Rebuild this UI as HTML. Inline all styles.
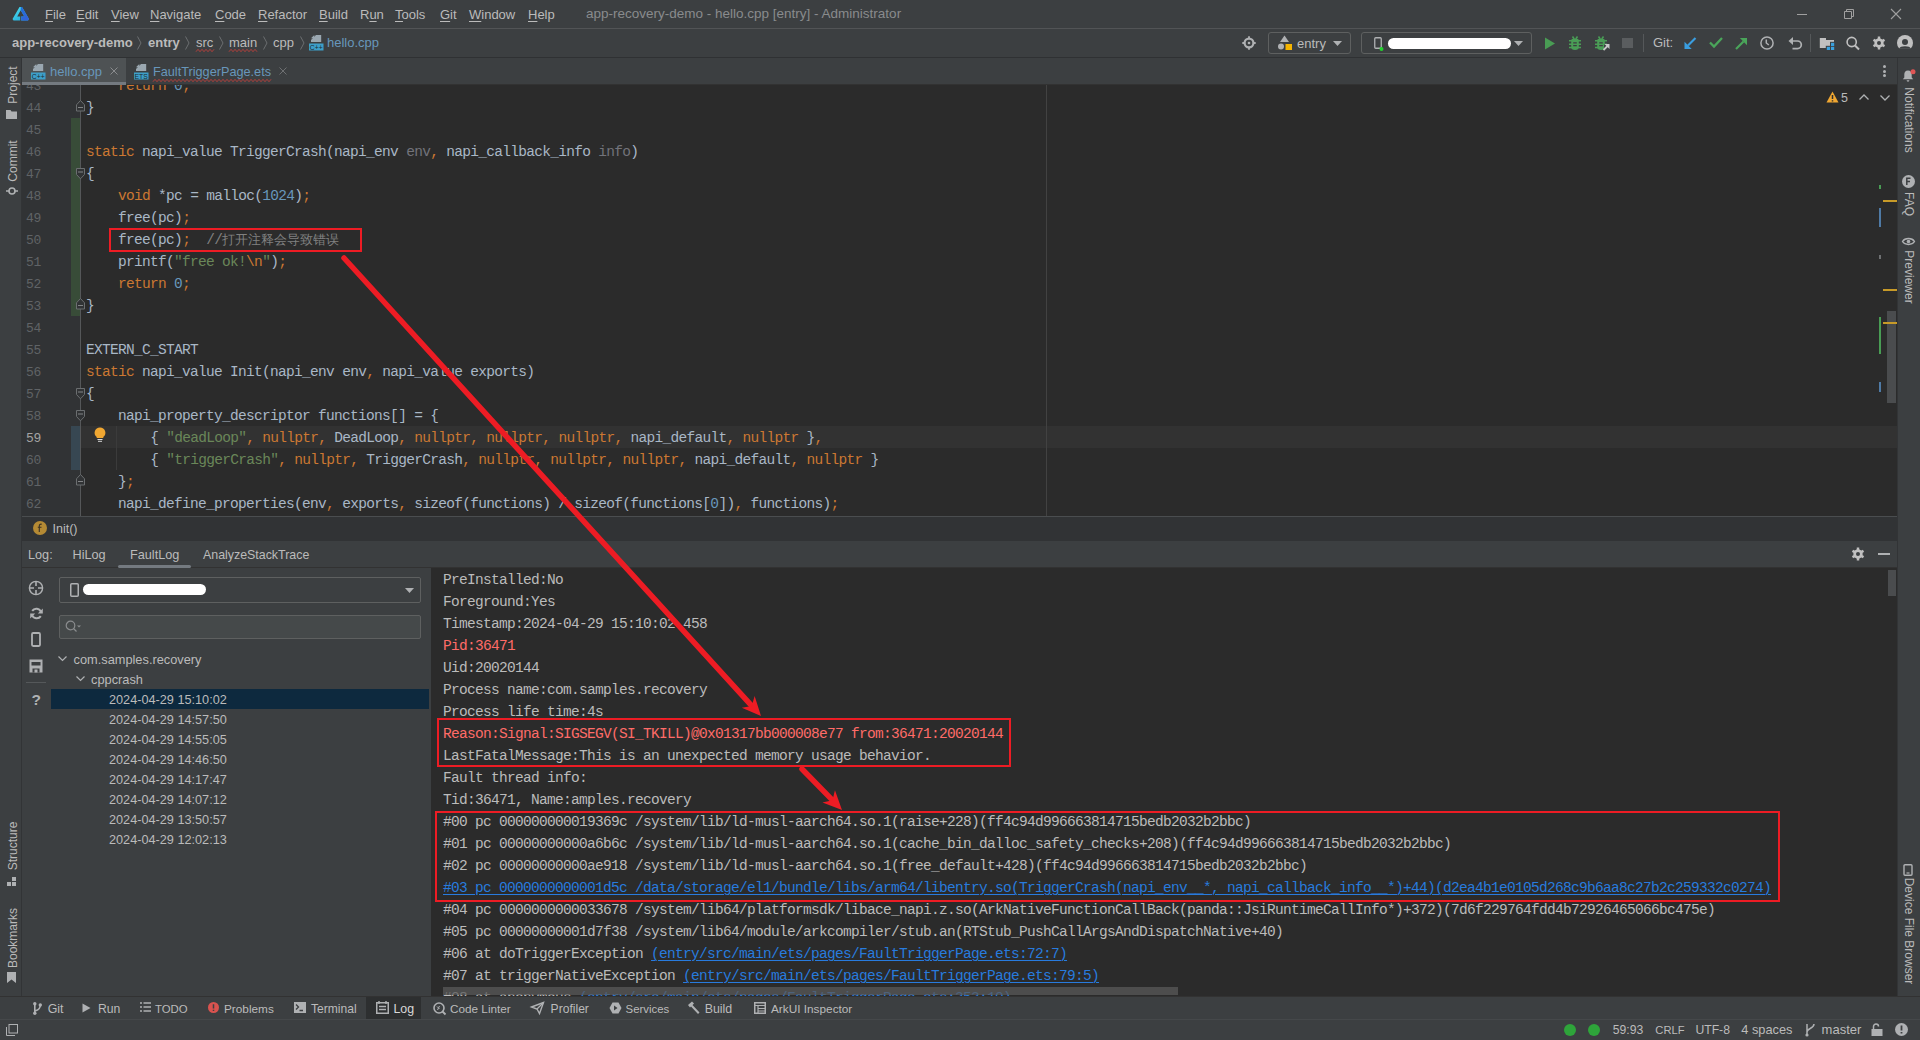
<!DOCTYPE html><html><head><meta charset="utf-8"><title>DevEco</title><style>
*{margin:0;padding:0;box-sizing:border-box}
html,body{width:1920px;height:1040px;overflow:hidden;background:#3c3f41}
body{position:relative;font-family:"Liberation Sans", sans-serif;color:#bbbbbb}
.a{position:absolute;white-space:pre}
svg.a{overflow:visible}
.m{font-family:"Liberation Mono", monospace}
</style></head><body><div class="a" style="left:0px;top:0px;width:1920px;height:1040px;background:#3c3f41;"></div><div class="a" style="left:0px;top:28px;width:1920px;height:1px;background:#525456;"></div><div class="a" style="left:0px;top:57px;width:1920px;height:1px;background:#2f3133;"></div><div class="a" style="left:21px;top:58px;width:1px;height:938px;background:#323436;"></div><div class="a" style="left:1897px;top:58px;width:1px;height:938px;background:#323436;"></div><div class="a" style="left:22px;top:58px;width:104px;height:24px;background:#4e5254;"></div><div class="a" style="left:22px;top:82px;width:104px;height:3px;background:#747a80;"></div><div class="a" style="left:126px;top:84px;width:1771px;height:1px;background:#323232;"></div><div class="a" style="left:22px;top:85px;width:59px;height:431px;background:#313335;"></div><div class="a" style="left:81px;top:85px;width:1816px;height:431px;background:#2b2b2b;"></div><div class="a" style="left:80px;top:85px;width:1px;height:431px;background:#555759;"></div><div class="a" style="left:81px;top:426px;width:1816px;height:22px;background:#323232;"></div><div class="a" style="left:1046px;top:85px;width:1px;height:431px;background:#424242;"></div><div class="a" style="left:22px;top:516px;width:1875px;height:1px;background:#4a4d4f;"></div><div class="a" style="left:22px;top:517px;width:1875px;height:24px;background:#313335;"></div><div class="a" style="left:22px;top:541px;width:1875px;height:26px;background:#3c3f41;"></div><div class="a" style="left:22px;top:567px;width:1875px;height:1px;background:#323232;"></div><div class="a" style="left:22px;top:568px;width:409px;height:428px;background:#3c3f41;"></div><div class="a" style="left:431px;top:568px;width:1466px;height:428px;background:#2b2b2b;"></div><div class="a" style="left:0px;top:996px;width:1920px;height:1px;background:#323232;"></div><div class="a" style="left:0px;top:1019px;width:1920px;height:1px;background:#45484a;"></div><svg class="a" style="left:12px;top:6px;" width="18" height="16" viewBox="0 0 18 16"><defs><linearGradient id="lg1" x1="0" y1="0" x2="1" y2="1"><stop offset="0" stop-color="#4fe3ef"/><stop offset="1" stop-color="#1a9fd8"/></linearGradient><linearGradient id="lg2" x1="0" y1="0" x2="1" y2="1"><stop offset="0" stop-color="#1f6fd8"/><stop offset="1" stop-color="#3a5fd8"/></linearGradient></defs>
<path d="M7.5 1 L10 1 L17 13 L16 14.5 L9.2 14.5 L9.2 10.5 L12.3 10.5 L8.7 4.2 L5.2 10.5 L8.2 10.5 L8.2 14.5 L1.5 14.5 L0.5 13 Z" fill="url(#lg1)"/>
<path d="M8.8 1 L10 1 L17 13 L16 14.5 L9.2 14.5 L9.2 10.5 L12.3 10.5 L8.7 4.2 Z" fill="url(#lg2)"/></svg><div class="a" style="left:45px;top:4.5px;font-size:13px;line-height:20px;color:#bbbbbb;font-weight:400;">File</div><div class="a" style="left:76px;top:4.5px;font-size:13px;line-height:20px;color:#bbbbbb;font-weight:400;">Edit</div><div class="a" style="left:111px;top:4.5px;font-size:13px;line-height:20px;color:#bbbbbb;font-weight:400;">View</div><div class="a" style="left:150px;top:4.5px;font-size:13px;line-height:20px;color:#bbbbbb;font-weight:400;">Navigate</div><div class="a" style="left:215px;top:4.5px;font-size:13px;line-height:20px;color:#bbbbbb;font-weight:400;">Code</div><div class="a" style="left:258px;top:4.5px;font-size:13px;line-height:20px;color:#bbbbbb;font-weight:400;">Refactor</div><div class="a" style="left:319px;top:4.5px;font-size:13px;line-height:20px;color:#bbbbbb;font-weight:400;">Build</div><div class="a" style="left:360px;top:4.5px;font-size:13px;line-height:20px;color:#bbbbbb;font-weight:400;">Run</div><div class="a" style="left:395px;top:4.5px;font-size:13px;line-height:20px;color:#bbbbbb;font-weight:400;">Tools</div><div class="a" style="left:440px;top:4.5px;font-size:13px;line-height:20px;color:#bbbbbb;font-weight:400;">Git</div><div class="a" style="left:469px;top:4.5px;font-size:13px;line-height:20px;color:#bbbbbb;font-weight:400;">Window</div><div class="a" style="left:528px;top:4.5px;font-size:13px;line-height:20px;color:#bbbbbb;font-weight:400;">Help</div><div class="a" style="left:586px;top:4.0px;font-size:13.5px;line-height:20px;color:#898b8d;font-weight:400;">app-recovery-demo - hello.cpp [entry] - Administrator</div><div class="a" style="left:1797px;top:14px;width:10px;height:1px;background:#a0a0a0;"></div><svg class="a" style="left:1843px;top:8px;" width="12" height="12" viewBox="0 0 12 12"><path d="M1.5 3.5h7v7h-7z M3.5 3.5v-2h7v7h-2" fill="none" stroke="#a0a0a0" stroke-width="1"/></svg><svg class="a" style="left:1890px;top:8px;" width="12" height="12" viewBox="0 0 12 12"><path d="M1 1L11 11M11 1L1 11" stroke="#a0a0a0" stroke-width="1.1"/></svg><div class="a" style="left:45px;top:4.5px;font-size:13px;line-height:20px;color:transparent"><span></span><span style="text-decoration:underline;text-decoration-color:#bbbbbb;text-underline-offset:2px">F</span></div><div class="a" style="left:76px;top:4.5px;font-size:13px;line-height:20px;color:transparent"><span></span><span style="text-decoration:underline;text-decoration-color:#bbbbbb;text-underline-offset:2px">E</span></div><div class="a" style="left:111px;top:4.5px;font-size:13px;line-height:20px;color:transparent"><span></span><span style="text-decoration:underline;text-decoration-color:#bbbbbb;text-underline-offset:2px">V</span></div><div class="a" style="left:150px;top:4.5px;font-size:13px;line-height:20px;color:transparent"><span></span><span style="text-decoration:underline;text-decoration-color:#bbbbbb;text-underline-offset:2px">N</span></div><div class="a" style="left:215px;top:4.5px;font-size:13px;line-height:20px;color:transparent"><span></span><span style="text-decoration:underline;text-decoration-color:#bbbbbb;text-underline-offset:2px">C</span></div><div class="a" style="left:258px;top:4.5px;font-size:13px;line-height:20px;color:transparent"><span></span><span style="text-decoration:underline;text-decoration-color:#bbbbbb;text-underline-offset:2px">R</span></div><div class="a" style="left:319px;top:4.5px;font-size:13px;line-height:20px;color:transparent"><span></span><span style="text-decoration:underline;text-decoration-color:#bbbbbb;text-underline-offset:2px">B</span></div><div class="a" style="left:360px;top:4.5px;font-size:13px;line-height:20px;color:transparent"><span>R</span><span style="text-decoration:underline;text-decoration-color:#bbbbbb;text-underline-offset:2px">u</span></div><div class="a" style="left:395px;top:4.5px;font-size:13px;line-height:20px;color:transparent"><span></span><span style="text-decoration:underline;text-decoration-color:#bbbbbb;text-underline-offset:2px">T</span></div><div class="a" style="left:440px;top:4.5px;font-size:13px;line-height:20px;color:transparent"><span></span><span style="text-decoration:underline;text-decoration-color:#bbbbbb;text-underline-offset:2px">G</span></div><div class="a" style="left:469px;top:4.5px;font-size:13px;line-height:20px;color:transparent"><span></span><span style="text-decoration:underline;text-decoration-color:#bbbbbb;text-underline-offset:2px">W</span></div><div class="a" style="left:528px;top:4.5px;font-size:13px;line-height:20px;color:transparent"><span></span><span style="text-decoration:underline;text-decoration-color:#bbbbbb;text-underline-offset:2px">H</span></div><div class="a" style="left:12px;top:33.0px;font-size:13px;line-height:20px;color:#bbbbbb;font-weight:700;">app-recovery-demo</div><svg class="a" style="left:137px;top:36px;" width="5" height="14" viewBox="0 0 5 14"><path d="M0.5 0.5 L4 7 L0.5 13.5" fill="none" stroke="#6b6e70" stroke-width="1"/></svg><div class="a" style="left:148px;top:33.0px;font-size:13px;line-height:20px;color:#bbbbbb;font-weight:700;">entry</div><svg class="a" style="left:185px;top:36px;" width="5" height="14" viewBox="0 0 5 14"><path d="M0.5 0.5 L4 7 L0.5 13.5" fill="none" stroke="#6b6e70" stroke-width="1"/></svg><div class="a" style="left:196px;top:33.0px;font-size:13px;line-height:20px;color:#bbbbbb;font-weight:400;">src</div><svg class="a" style="left:219px;top:36px;" width="5" height="14" viewBox="0 0 5 14"><path d="M0.5 0.5 L4 7 L0.5 13.5" fill="none" stroke="#6b6e70" stroke-width="1"/></svg><div class="a" style="left:229px;top:33.0px;font-size:13px;line-height:20px;color:#bbbbbb;font-weight:400;">main</div><svg class="a" style="left:263px;top:36px;" width="5" height="14" viewBox="0 0 5 14"><path d="M0.5 0.5 L4 7 L0.5 13.5" fill="none" stroke="#6b6e70" stroke-width="1"/></svg><div class="a" style="left:273px;top:33.0px;font-size:13px;line-height:20px;color:#bbbbbb;font-weight:400;">cpp</div><svg class="a" style="left:300px;top:36px;" width="5" height="14" viewBox="0 0 5 14"><path d="M0.5 0.5 L4 7 L0.5 13.5" fill="none" stroke="#6b6e70" stroke-width="1"/></svg><svg class="a" style="left:196px;top:49.3px;" width="18" height="3" viewBox="0 0 18 3"><path d="M0 2.7 L2 0.3 L4 2.7 L6 0.3 L8 2.7 L10 0.3 L12 2.7 L14 0.3 L16 2.7 L18 0.3" fill="none" stroke="#bc3f3c" stroke-width="0.9"/></svg><svg class="a" style="left:229px;top:49.3px;" width="28" height="3" viewBox="0 0 28 3"><path d="M0 2.7 L2 0.3 L4 2.7 L6 0.3 L8 2.7 L10 0.3 L12 2.7 L14 0.3 L16 2.7 L18 0.3 L20 2.7 L22 0.3 L24 2.7 L26 0.3 L28 2.7" fill="none" stroke="#bc3f3c" stroke-width="0.9"/></svg><svg class="a" style="left:309px;top:35px;" width="15" height="16" viewBox="0 0 15 16"><path d="M7 0 H12.2 V7 H2 V5 Z" fill="#9aa7b0"/><path d="M2 3.3 L5.3 0 V3.3 Z" fill="#9aa7b0"/><rect x="0" y="8.5" width="14.5" height="7" fill="#3d9fc9"/><text x="7.2" y="14.6" font-family="Liberation Sans" font-size="6.8" font-weight="400" fill="#1e2a30" text-anchor="middle">C++</text></svg><div class="a" style="left:327px;top:33.0px;font-size:13px;line-height:20px;color:#6897bb;font-weight:400;">hello.cpp</div><svg class="a" style="left:1242px;top:36px;" width="14" height="14" viewBox="0 0 14 14"><circle cx="7" cy="7" r="4.4" fill="none" stroke="#afb1b3" stroke-width="2.2"/><circle cx="7" cy="7" r="1.3" fill="#afb1b3"/><path d="M7 0.3V2.5M7 11.5V13.7M0.3 7H2.5M11.5 7H13.7" stroke="#afb1b3" stroke-width="1.8"/></svg><div class="a" style="left:1268px;top:32px;width:83px;height:22px;border:1px solid #5e6060;border-radius:3px"></div><svg class="a" style="left:1278px;top:35px;" width="16" height="16" viewBox="0 0 16 16"><path d="M6.5 0.5 L11 7 H2 Z" fill="#afb1b3"/><circle cx="3" cy="11.5" r="3" fill="#afb1b3"/><rect x="7.5" y="9" width="6.5" height="6" fill="#f4b400"/></svg><div class="a" style="left:1297px;top:34.0px;font-size:13px;line-height:20px;color:#bbbbbb;font-weight:400;">entry</div><svg class="a" style="left:1333px;top:41px;" width="9" height="5" viewBox="0 0 9 5"><path d="M0 0H9L4.5 5Z" fill="#afb1b3"/></svg><div class="a" style="left:1361px;top:32px;width:171px;height:22px;border:1px solid #5e6060;border-radius:3px"></div><svg class="a" style="left:1374px;top:37px;" width="9" height="13" viewBox="0 0 9 13"><rect x="0.75" y="0.75" width="6.5" height="10.5" rx="1" fill="none" stroke="#afb1b3" stroke-width="1.3"/><circle cx="7.5" cy="12" r="2" fill="#22d32e"/></svg><div class="a" style="left:1388px;top:38px;width:123px;height:11px;background:#ffffff;border-radius:6px"></div><svg class="a" style="left:1514px;top:41px;" width="9" height="5" viewBox="0 0 9 5"><path d="M0 0H9L4.5 5Z" fill="#afb1b3"/></svg><svg class="a" style="left:1544px;top:37px;" width="12" height="13" viewBox="0 0 12 13"><path d="M1 0.5 L11 6.5 L1 12.5 Z" fill="#499c54"/></svg><svg class="a" style="left:1569px;top:36px;" width="12" height="14" viewBox="0 0 12 14"><path d="M3.5 0.6 L5.2 2.9 M8.5 0.6 L6.8 2.9" stroke="#4a9d56" stroke-width="1.6"/><path d="M2.2 4.2 Q2.2 2.5 6 2.5 Q9.8 2.5 9.8 4.2 V11.3 Q9.8 14 6 14 Q2.2 14 2.2 11.3 Z" fill="#4a9d56"/><path d="M0 4.8H12 M0 8.2H12 M0 11.5H12" stroke="#4a9d56" stroke-width="1.5"/><path d="M4.2 6.8H7.8 M4.2 9.6H7.8" stroke="#3c3f41" stroke-width="1.3"/></svg><svg class="a" style="left:1595px;top:36px;" width="15" height="15" viewBox="0 0 15 15"><path d="M3.5 0.6 L5.2 2.9 M8.5 0.6 L6.8 2.9" stroke="#4a9d56" stroke-width="1.6"/><path d="M2.2 4.2 Q2.2 2.5 6 2.5 Q9.8 2.5 9.8 4.2 V11.3 Q9.8 14 6 14 Q2.2 14 2.2 11.3 Z" fill="#4a9d56"/><path d="M0 4.8H12 M0 8.2H12 M0 11.5H12" stroke="#4a9d56" stroke-width="1.5"/><path d="M4.2 6.8H7.8 M4.2 9.6H7.8" stroke="#3c3f41" stroke-width="1.3"/><path d="M9 8.5 H15 V15 H9Z" fill="#3c3f41"/><path d="M8.5 14 L13.5 9" stroke="#c8c8c8" stroke-width="1.8"/><path d="M9.5 8 H14.5 V13 Z" fill="#c8c8c8"/></svg><div class="a" style="left:1622px;top:38px;width:11px;height:10px;background:#5a5d5f;"></div><div class="a" style="left:1643px;top:34px;width:1px;height:18px;background:#55585a;"></div><div class="a" style="left:1653px;top:33.0px;font-size:13px;line-height:20px;color:#bbbbbb;font-weight:400;">Git:</div><svg class="a" style="left:1684px;top:37px;" width="13" height="13" viewBox="0 0 13 13"><path d="M11.5 1 L4 8.5" stroke="#3a9ee0" stroke-width="2.2"/><path d="M0.5 12 V4.8 L7.7 12 Z" fill="#3a9ee0"/></svg><svg class="a" style="left:1709px;top:36px;" width="14" height="13" viewBox="0 0 14 13"><path d="M1 6.5 L5 10.5 L13 2" fill="none" stroke="#4aa55a" stroke-width="2.3"/></svg><svg class="a" style="left:1735px;top:37px;" width="13" height="13" viewBox="0 0 13 13"><path d="M1 12 L8.5 4.5" stroke="#4aa55a" stroke-width="2.2"/><path d="M12 1 H4.8 L12 8.2 Z" fill="#4aa55a"/></svg><svg class="a" style="left:1760px;top:36px;" width="14" height="14" viewBox="0 0 14 14"><circle cx="7" cy="7" r="6.1" fill="none" stroke="#afb1b3" stroke-width="1.5"/><path d="M6.3 3.6 V7 L8.8 9" fill="none" stroke="#afb1b3" stroke-width="1.5"/></svg><svg class="a" style="left:1788px;top:36px;" width="15" height="15" viewBox="0 0 15 15"><path d="M4 5 H9.5 A3.8 3.8 0 0 1 9.5 12.6 H4.5" fill="none" stroke="#afb1b3" stroke-width="1.7"/><path d="M0.5 5 L5 1 V9 Z" fill="#afb1b3"/></svg><div class="a" style="left:1810px;top:34px;width:1px;height:18px;background:#55585a;"></div><svg class="a" style="left:1819px;top:37px;" width="16" height="14" viewBox="0 0 16 14"><path d="M0.8 1 H7 V3 H15 V11 H0.8Z" fill="#c0c0c0"/><rect x="11" y="4.8" width="5" height="9.2" fill="#3c3f41"/><rect x="6.8" y="8.8" width="9.2" height="5.2" fill="#3c3f41"/><rect x="12" y="5.8" width="3.2" height="3.2" fill="#3aa0dd"/><rect x="7.8" y="9.8" width="3.2" height="3.2" fill="#3aa0dd"/><rect x="12" y="9.8" width="3.2" height="3.2" fill="#3aa0dd"/></svg><svg class="a" style="left:1845px;top:36px;" width="15" height="15" viewBox="0 0 15 15"><circle cx="6.7" cy="6" r="4.6" fill="none" stroke="#c0c0c0" stroke-width="1.6"/><path d="M10 9.5 L14 13.5" stroke="#c0c0c0" stroke-width="2"/></svg><svg class="a" style="left:1872px;top:36px;" width="14" height="14" viewBox="0 0 14 14"><polygon points="4.75,3.10 5.79,2.15 5.76,0.62 8.24,0.62 8.21,2.15 9.25,3.10 9.25,3.10 10.60,3.53 11.91,2.74 13.15,4.88 11.81,5.62 11.50,7.00 11.50,7.00 11.81,8.38 13.15,9.12 11.91,11.26 10.60,10.47 9.25,10.90 9.25,10.90 8.21,11.85 8.24,13.38 5.76,13.38 5.79,11.85 4.75,10.90 4.75,10.90 3.40,10.47 2.09,11.26 0.85,9.12 2.19,8.38 2.50,7.00 2.50,7.00 2.19,5.62 0.85,4.88 2.09,2.74 3.40,3.53 4.75,3.10" fill="#c0c0c0"/><circle cx="7" cy="7" r="2" fill="#3c3f41"/></svg><svg class="a" style="left:1897px;top:35px;" width="16" height="16" viewBox="0 0 16 16"><defs><clipPath id="avc"><rect x="-1" y="-1" width="18" height="14.3"/></clipPath></defs><circle cx="8" cy="8" r="8" fill="#c0c0c0" clip-path="url(#avc)"/><circle cx="8" cy="7" r="3" fill="#3c3f41"/><path d="M2.3 13.4 Q3 11.3 8 11.3 Q13 11.3 13.7 13.4 Z" fill="#3c3f41"/></svg><svg class="a" style="left:31px;top:64px;" width="15" height="16" viewBox="0 0 15 16"><path d="M7 0 H12.2 V7 H2 V5 Z" fill="#9aa7b0"/><path d="M2 3.3 L5.3 0 V3.3 Z" fill="#9aa7b0"/><rect x="0" y="8.5" width="14.5" height="7" fill="#3d9fc9"/><text x="7.2" y="14.6" font-family="Liberation Sans" font-size="6.8" font-weight="400" fill="#1e2a30" text-anchor="middle">C++</text></svg><div class="a" style="left:50px;top:61.5px;font-size:13px;line-height:20px;color:#6897bb;font-weight:400;">hello.cpp</div><svg class="a" style="left:110px;top:67px;" width="8" height="8" viewBox="0 0 8 8"><path d="M0.5 0.5L7.5 7.5M7.5 0.5L0.5 7.5" stroke="#8a8c8e" stroke-width="1"/></svg><svg class="a" style="left:134px;top:64px;" width="15" height="16" viewBox="0 0 15 16"><path d="M7 0 H12.2 V7 H2 V5 Z" fill="#9aa7b0"/><path d="M2 3.3 L5.3 0 V3.3 Z" fill="#9aa7b0"/><rect x="0" y="8.5" width="14.5" height="7" fill="#3d9fc9"/><text x="7.2" y="14.6" font-family="Liberation Sans" font-size="6.8" font-weight="400" fill="#1e2a30" text-anchor="middle">ETS</text></svg><div class="a" style="left:153px;top:61.5px;font-size:12.7px;line-height:20px;color:#6897bb;font-weight:400;">FaultTriggerPage.ets</div><svg class="a" style="left:153px;top:78.5px;" width="118" height="3" viewBox="0 0 118 3"><path d="M0 2.7 L2 0.3 L4 2.7 L6 0.3 L8 2.7 L10 0.3 L12 2.7 L14 0.3 L16 2.7 L18 0.3 L20 2.7 L22 0.3 L24 2.7 L26 0.3 L28 2.7 L30 0.3 L32 2.7 L34 0.3 L36 2.7 L38 0.3 L40 2.7 L42 0.3 L44 2.7 L46 0.3 L48 2.7 L50 0.3 L52 2.7 L54 0.3 L56 2.7 L58 0.3 L60 2.7 L62 0.3 L64 2.7 L66 0.3 L68 2.7 L70 0.3 L72 2.7 L74 0.3 L76 2.7 L78 0.3 L80 2.7 L82 0.3 L84 2.7 L86 0.3 L88 2.7 L90 0.3 L92 2.7 L94 0.3 L96 2.7 L98 0.3 L100 2.7 L102 0.3 L104 2.7 L106 0.3 L108 2.7 L110 0.3 L112 2.7 L114 0.3 L116 2.7 L118 0.3" fill="none" stroke="#bc3f3c" stroke-width="0.9"/></svg><svg class="a" style="left:279px;top:67px;" width="8" height="8" viewBox="0 0 8 8"><path d="M0.5 0.5L7.5 7.5M7.5 0.5L0.5 7.5" stroke="#6e7072" stroke-width="1"/></svg><div class="a" style="left:1883px;top:65px;width:3px;height:3px;border-radius:50%;background:#afb1b3"></div><div class="a" style="left:1883px;top:69.5px;width:3px;height:3px;border-radius:50%;background:#afb1b3"></div><div class="a" style="left:1883px;top:74px;width:3px;height:3px;border-radius:50%;background:#afb1b3"></div><div class="a" style="left:12.5px;top:85.0px;font-size:12px;line-height:14px;color:#bbbbbb;transform:translate(-50%,-50%) rotate(-90deg);transform-origin:center">Project</div><svg class="a" style="left:6px;top:110px;" width="11" height="9" viewBox="0 0 11 9"><path d="M0 0 H4.5 L5.5 1.5 H11 V9 H0 Z" fill="#afb1b3"/></svg><div class="a" style="left:12.5px;top:160.5px;font-size:12px;line-height:14px;color:#bbbbbb;transform:translate(-50%,-50%) rotate(-90deg);transform-origin:center">Commit</div><svg class="a" style="left:6px;top:186px;" width="12" height="10" viewBox="0 0 12 10"><circle cx="6" cy="5" r="3" fill="none" stroke="#afb1b3" stroke-width="1.6"/><path d="M0 5H3M9 5H12" stroke="#afb1b3" stroke-width="1.6"/></svg><div class="a" style="left:12.5px;top:846.0px;font-size:12px;line-height:14px;color:#bbbbbb;transform:translate(-50%,-50%) rotate(-90deg);transform-origin:center">Structure</div><svg class="a" style="left:7px;top:877px;" width="9" height="9" viewBox="0 0 9 9"><rect x="5" y="0" width="4" height="4" fill="#afb1b3"/><rect x="0" y="5" width="4" height="4" fill="#afb1b3"/><rect x="5" y="5" width="4" height="4" fill="#afb1b3"/></svg><div class="a" style="left:12.5px;top:937.5px;font-size:12px;line-height:14px;color:#bbbbbb;transform:translate(-50%,-50%) rotate(-90deg);transform-origin:center">Bookmarks</div><svg class="a" style="left:7px;top:972px;" width="9" height="11" viewBox="0 0 9 11"><path d="M0 0H9V11L4.5 7.5L0 11Z" fill="#afb1b3"/></svg><svg class="a" style="left:1902px;top:69px;" width="14" height="14" viewBox="0 0 14 14"><path d="M6 1.5 C3.3 1.5 2.3 3.5 2.3 5.5 V8.5 L0.8 10.3 H11.2 L9.7 8.5 V5.5 C9.7 3.5 8.7 1.5 6 1.5Z" fill="#afb1b3"/><path d="M4.6 11.3 A1.4 1.4 0 0 0 7.4 11.3Z" fill="#afb1b3"/><circle cx="11" cy="2.8" r="2.5" fill="#e05555"/></svg><div class="a" style="left:1908.5px;top:120.0px;font-size:12px;line-height:14px;color:#bbbbbb;transform:translate(-50%,-50%) rotate(90deg);transform-origin:center">Notifications</div><svg class="a" style="left:1902px;top:175px;" width="13" height="13" viewBox="0 0 13 13"><circle cx="6.5" cy="6.5" r="6.5" fill="#afb1b3"/><path d="M4.8 10V3.3H8.5M4.8 6.5H8" fill="none" stroke="#3c3f41" stroke-width="1.5"/></svg><div class="a" style="left:1908.5px;top:204.0px;font-size:12px;line-height:14px;color:#bbbbbb;transform:translate(-50%,-50%) rotate(90deg);transform-origin:center">FAQ</div><svg class="a" style="left:1902px;top:237px;" width="13" height="9" viewBox="0 0 13 9"><path d="M0.5 4.5 C3 0.5 10 0.5 12.5 4.5 C10 8.5 3 8.5 0.5 4.5Z" fill="none" stroke="#afb1b3" stroke-width="1.4"/><circle cx="6.5" cy="4.5" r="1.8" fill="#afb1b3"/></svg><div class="a" style="left:1908.5px;top:276.5px;font-size:12px;line-height:14px;color:#bbbbbb;transform:translate(-50%,-50%) rotate(90deg);transform-origin:center">Previewer</div><svg class="a" style="left:1903px;top:864px;" width="10" height="12" viewBox="0 0 10 12"><rect x="1" y="0.75" width="8" height="10.5" rx="1" fill="none" stroke="#afb1b3" stroke-width="1.4"/><path d="M3.5 9H6.5" stroke="#afb1b3" stroke-width="1.2"/></svg><div class="a" style="left:1908.5px;top:931.0px;font-size:12px;line-height:14px;color:#bbbbbb;transform:translate(-50%,-50%) rotate(90deg);transform-origin:center">Device File Browser</div><div class="a" style="left:71px;top:118px;width:9px;height:198px;background:#384c38;"></div><div class="a" style="left:71px;top:426px;width:9px;height:44px;background:#374752;"></div><div class="a" style="left:116px;top:426px;width:1px;height:44px;background:#3b3b3b;"></div><div class="a" style="left:22px;top:85px;width:1875px;height:431px;overflow:hidden"><div class="a m" style="left:64px;top:-10px;font-size:14.5px;line-height:22px;letter-spacing:-0.7014px;"><span style="color:#a9b7c6"> </span><span style="color:#a9b7c6"> </span><span style="color:#a9b7c6"> </span><span style="color:#a9b7c6"> </span><span style="color:#cc7832">return</span><span style="color:#a9b7c6"> </span><span style="color:#6897bb">0</span><span style="color:#cc7832">;</span></div><div class="a m" style="left:-21px;top:-9.5px;width:40px;text-align:right;font-size:13px;line-height:22px;letter-spacing:-0.3px;color:#606366">43</div><div class="a m" style="left:64px;top:12px;font-size:14.5px;line-height:22px;letter-spacing:-0.7014px;"><span style="color:#a9b7c6">}</span></div><div class="a m" style="left:-21px;top:12.5px;width:40px;text-align:right;font-size:13px;line-height:22px;letter-spacing:-0.3px;color:#606366">44</div><div class="a m" style="left:64px;top:34px;font-size:14.5px;line-height:22px;letter-spacing:-0.7014px;"></div><div class="a m" style="left:-21px;top:34.5px;width:40px;text-align:right;font-size:13px;line-height:22px;letter-spacing:-0.3px;color:#606366">45</div><div class="a m" style="left:64px;top:56px;font-size:14.5px;line-height:22px;letter-spacing:-0.7014px;"><span style="color:#cc7832">static</span><span style="color:#a9b7c6"> </span><span style="color:#a9b7c6">napi_value</span><span style="color:#a9b7c6"> </span><span style="color:#a9b7c6">TriggerCrash</span><span style="color:#a9b7c6">(</span><span style="color:#a9b7c6">napi_env</span><span style="color:#a9b7c6"> </span><span style="color:#72737a">env</span><span style="color:#cc7832">,</span><span style="color:#a9b7c6"> </span><span style="color:#a9b7c6">napi_callback_info</span><span style="color:#a9b7c6"> </span><span style="color:#72737a">info</span><span style="color:#a9b7c6">)</span></div><div class="a m" style="left:-21px;top:56.5px;width:40px;text-align:right;font-size:13px;line-height:22px;letter-spacing:-0.3px;color:#606366">46</div><div class="a m" style="left:64px;top:78px;font-size:14.5px;line-height:22px;letter-spacing:-0.7014px;"><span style="color:#a9b7c6">{</span></div><div class="a m" style="left:-21px;top:78.5px;width:40px;text-align:right;font-size:13px;line-height:22px;letter-spacing:-0.3px;color:#606366">47</div><div class="a m" style="left:64px;top:100px;font-size:14.5px;line-height:22px;letter-spacing:-0.7014px;"><span style="color:#a9b7c6"> </span><span style="color:#a9b7c6"> </span><span style="color:#a9b7c6"> </span><span style="color:#a9b7c6"> </span><span style="color:#cc7832">void</span><span style="color:#a9b7c6"> </span><span style="color:#a9b7c6">*</span><span style="color:#a9b7c6">pc</span><span style="color:#a9b7c6"> </span><span style="color:#a9b7c6">=</span><span style="color:#a9b7c6"> </span><span style="color:#a9b7c6">malloc</span><span style="color:#a9b7c6">(</span><span style="color:#6897bb">1024</span><span style="color:#a9b7c6">)</span><span style="color:#cc7832">;</span></div><div class="a m" style="left:-21px;top:100.5px;width:40px;text-align:right;font-size:13px;line-height:22px;letter-spacing:-0.3px;color:#606366">48</div><div class="a m" style="left:64px;top:122px;font-size:14.5px;line-height:22px;letter-spacing:-0.7014px;"><span style="color:#a9b7c6"> </span><span style="color:#a9b7c6"> </span><span style="color:#a9b7c6"> </span><span style="color:#a9b7c6"> </span><span style="color:#a9b7c6">free</span><span style="color:#a9b7c6">(</span><span style="color:#a9b7c6">pc</span><span style="color:#a9b7c6">)</span><span style="color:#cc7832">;</span></div><div class="a m" style="left:-21px;top:122.5px;width:40px;text-align:right;font-size:13px;line-height:22px;letter-spacing:-0.3px;color:#606366">49</div><div class="a m" style="left:64px;top:144px;font-size:14.5px;line-height:22px;letter-spacing:-0.7014px;"><span style="color:#a9b7c6"> </span><span style="color:#a9b7c6"> </span><span style="color:#a9b7c6"> </span><span style="color:#a9b7c6"> </span><span style="color:#a9b7c6">free</span><span style="color:#a9b7c6">(</span><span style="color:#a9b7c6">pc</span><span style="color:#a9b7c6">)</span><span style="color:#cc7832">;</span><span style="color:#a9b7c6"> </span><span style="color:#a9b7c6"> </span><span style="color:#808080">//</span><span style="color:#808080;font-family:&quot;Liberation Sans&quot;, sans-serif;font-size:12.6px;letter-spacing:0px">打开注释会导致错误</span></div><div class="a m" style="left:-21px;top:144.5px;width:40px;text-align:right;font-size:13px;line-height:22px;letter-spacing:-0.3px;color:#606366">50</div><div class="a m" style="left:64px;top:166px;font-size:14.5px;line-height:22px;letter-spacing:-0.7014px;"><span style="color:#a9b7c6"> </span><span style="color:#a9b7c6"> </span><span style="color:#a9b7c6"> </span><span style="color:#a9b7c6"> </span><span style="color:#a9b7c6">printf</span><span style="color:#a9b7c6">(</span><span style="color:#6a8759">"free ok!</span><span style="color:#cc7832">\n</span><span style="color:#6a8759">"</span><span style="color:#a9b7c6">)</span><span style="color:#cc7832">;</span></div><div class="a m" style="left:-21px;top:166.5px;width:40px;text-align:right;font-size:13px;line-height:22px;letter-spacing:-0.3px;color:#606366">51</div><div class="a m" style="left:64px;top:188px;font-size:14.5px;line-height:22px;letter-spacing:-0.7014px;"><span style="color:#a9b7c6"> </span><span style="color:#a9b7c6"> </span><span style="color:#a9b7c6"> </span><span style="color:#a9b7c6"> </span><span style="color:#cc7832">return</span><span style="color:#a9b7c6"> </span><span style="color:#6897bb">0</span><span style="color:#cc7832">;</span></div><div class="a m" style="left:-21px;top:188.5px;width:40px;text-align:right;font-size:13px;line-height:22px;letter-spacing:-0.3px;color:#606366">52</div><div class="a m" style="left:64px;top:210px;font-size:14.5px;line-height:22px;letter-spacing:-0.7014px;"><span style="color:#a9b7c6">}</span></div><div class="a m" style="left:-21px;top:210.5px;width:40px;text-align:right;font-size:13px;line-height:22px;letter-spacing:-0.3px;color:#606366">53</div><div class="a m" style="left:64px;top:232px;font-size:14.5px;line-height:22px;letter-spacing:-0.7014px;"></div><div class="a m" style="left:-21px;top:232.5px;width:40px;text-align:right;font-size:13px;line-height:22px;letter-spacing:-0.3px;color:#606366">54</div><div class="a m" style="left:64px;top:254px;font-size:14.5px;line-height:22px;letter-spacing:-0.7014px;"><span style="color:#a9b7c6">EXTERN_C_START</span></div><div class="a m" style="left:-21px;top:254.5px;width:40px;text-align:right;font-size:13px;line-height:22px;letter-spacing:-0.3px;color:#606366">55</div><div class="a m" style="left:64px;top:276px;font-size:14.5px;line-height:22px;letter-spacing:-0.7014px;"><span style="color:#cc7832">static</span><span style="color:#a9b7c6"> </span><span style="color:#a9b7c6">napi_value</span><span style="color:#a9b7c6"> </span><span style="color:#a9b7c6">Init</span><span style="color:#a9b7c6">(</span><span style="color:#a9b7c6">napi_env</span><span style="color:#a9b7c6"> </span><span style="color:#a9b7c6">env</span><span style="color:#cc7832">,</span><span style="color:#a9b7c6"> </span><span style="color:#a9b7c6">napi_value</span><span style="color:#a9b7c6"> </span><span style="color:#a9b7c6">exports</span><span style="color:#a9b7c6">)</span></div><div class="a m" style="left:-21px;top:276.5px;width:40px;text-align:right;font-size:13px;line-height:22px;letter-spacing:-0.3px;color:#606366">56</div><div class="a m" style="left:64px;top:298px;font-size:14.5px;line-height:22px;letter-spacing:-0.7014px;"><span style="color:#a9b7c6">{</span></div><div class="a m" style="left:-21px;top:298.5px;width:40px;text-align:right;font-size:13px;line-height:22px;letter-spacing:-0.3px;color:#606366">57</div><div class="a m" style="left:64px;top:320px;font-size:14.5px;line-height:22px;letter-spacing:-0.7014px;"><span style="color:#a9b7c6"> </span><span style="color:#a9b7c6"> </span><span style="color:#a9b7c6"> </span><span style="color:#a9b7c6"> </span><span style="color:#a9b7c6">napi_property_descriptor</span><span style="color:#a9b7c6"> </span><span style="color:#a9b7c6">functions</span><span style="color:#a9b7c6">[</span><span style="color:#a9b7c6">]</span><span style="color:#a9b7c6"> </span><span style="color:#a9b7c6">=</span><span style="color:#a9b7c6"> </span><span style="color:#a9b7c6">{</span></div><div class="a m" style="left:-21px;top:320.5px;width:40px;text-align:right;font-size:13px;line-height:22px;letter-spacing:-0.3px;color:#606366">58</div><div class="a m" style="left:64px;top:342px;font-size:14.5px;line-height:22px;letter-spacing:-0.7014px;"><span style="color:#a9b7c6"> </span><span style="color:#a9b7c6"> </span><span style="color:#a9b7c6"> </span><span style="color:#a9b7c6"> </span><span style="color:#a9b7c6"> </span><span style="color:#a9b7c6"> </span><span style="color:#a9b7c6"> </span><span style="color:#a9b7c6"> </span><span style="color:#a9b7c6">{</span><span style="color:#a9b7c6"> </span><span style="color:#6a8759">"deadLoop"</span><span style="color:#cc7832">,</span><span style="color:#a9b7c6"> </span><span style="color:#cc7832">nullptr</span><span style="color:#cc7832">,</span><span style="color:#a9b7c6"> </span><span style="color:#a9b7c6">DeadLoop</span><span style="color:#cc7832">,</span><span style="color:#a9b7c6"> </span><span style="color:#cc7832">nullptr</span><span style="color:#cc7832">,</span><span style="color:#a9b7c6"> </span><span style="color:#cc7832">nullptr</span><span style="color:#cc7832">,</span><span style="color:#a9b7c6"> </span><span style="color:#cc7832">nullptr</span><span style="color:#cc7832">,</span><span style="color:#a9b7c6"> </span><span style="color:#a9b7c6">napi_default</span><span style="color:#cc7832">,</span><span style="color:#a9b7c6"> </span><span style="color:#cc7832">nullptr</span><span style="color:#a9b7c6"> </span><span style="color:#a9b7c6">}</span><span style="color:#cc7832">,</span></div><div class="a m" style="left:-21px;top:342.5px;width:40px;text-align:right;font-size:13px;line-height:22px;letter-spacing:-0.3px;color:#a4a3a3">59</div><div class="a m" style="left:64px;top:364px;font-size:14.5px;line-height:22px;letter-spacing:-0.7014px;"><span style="color:#a9b7c6"> </span><span style="color:#a9b7c6"> </span><span style="color:#a9b7c6"> </span><span style="color:#a9b7c6"> </span><span style="color:#a9b7c6"> </span><span style="color:#a9b7c6"> </span><span style="color:#a9b7c6"> </span><span style="color:#a9b7c6"> </span><span style="color:#a9b7c6">{</span><span style="color:#a9b7c6"> </span><span style="color:#6a8759">"triggerCrash"</span><span style="color:#cc7832">,</span><span style="color:#a9b7c6"> </span><span style="color:#cc7832">nullptr</span><span style="color:#cc7832">,</span><span style="color:#a9b7c6"> </span><span style="color:#a9b7c6">TriggerCrash</span><span style="color:#cc7832">,</span><span style="color:#a9b7c6"> </span><span style="color:#cc7832">nullptr</span><span style="color:#cc7832">,</span><span style="color:#a9b7c6"> </span><span style="color:#cc7832">nullptr</span><span style="color:#cc7832">,</span><span style="color:#a9b7c6"> </span><span style="color:#cc7832">nullptr</span><span style="color:#cc7832">,</span><span style="color:#a9b7c6"> </span><span style="color:#a9b7c6">napi_default</span><span style="color:#cc7832">,</span><span style="color:#a9b7c6"> </span><span style="color:#cc7832">nullptr</span><span style="color:#a9b7c6"> </span><span style="color:#a9b7c6">}</span></div><div class="a m" style="left:-21px;top:364.5px;width:40px;text-align:right;font-size:13px;line-height:22px;letter-spacing:-0.3px;color:#606366">60</div><div class="a m" style="left:64px;top:386px;font-size:14.5px;line-height:22px;letter-spacing:-0.7014px;"><span style="color:#a9b7c6"> </span><span style="color:#a9b7c6"> </span><span style="color:#a9b7c6"> </span><span style="color:#a9b7c6"> </span><span style="color:#a9b7c6">}</span><span style="color:#cc7832">;</span></div><div class="a m" style="left:-21px;top:386.5px;width:40px;text-align:right;font-size:13px;line-height:22px;letter-spacing:-0.3px;color:#606366">61</div><div class="a m" style="left:64px;top:408px;font-size:14.5px;line-height:22px;letter-spacing:-0.7014px;"><span style="color:#a9b7c6"> </span><span style="color:#a9b7c6"> </span><span style="color:#a9b7c6"> </span><span style="color:#a9b7c6"> </span><span style="color:#a9b7c6">napi_define_properties</span><span style="color:#a9b7c6">(</span><span style="color:#a9b7c6">env</span><span style="color:#cc7832">,</span><span style="color:#a9b7c6"> </span><span style="color:#a9b7c6">exports</span><span style="color:#cc7832">,</span><span style="color:#a9b7c6"> </span><span style="color:#a9b7c6">sizeof</span><span style="color:#a9b7c6">(</span><span style="color:#a9b7c6">functions</span><span style="color:#a9b7c6">)</span><span style="color:#a9b7c6"> </span><span style="color:#a9b7c6">/</span><span style="color:#a9b7c6"> </span><span style="color:#a9b7c6">sizeof</span><span style="color:#a9b7c6">(</span><span style="color:#a9b7c6">functions</span><span style="color:#a9b7c6">[</span><span style="color:#6897bb">0</span><span style="color:#a9b7c6">]</span><span style="color:#a9b7c6">)</span><span style="color:#cc7832">,</span><span style="color:#a9b7c6"> </span><span style="color:#a9b7c6">functions</span><span style="color:#a9b7c6">)</span><span style="color:#cc7832">;</span></div><div class="a m" style="left:-21px;top:408.5px;width:40px;text-align:right;font-size:13px;line-height:22px;letter-spacing:-0.3px;color:#606366">62</div></div><svg class="a" style="left:76px;top:100px;" width="9" height="12" viewBox="0 0 9 12"><path d="M0.5 11 H8.5 V4.8 L4.5 0.5 L0.5 4.8 Z" fill="#313335" stroke="#6b6e70" stroke-width="1"/><path d="M2 7.5H7" stroke="#8a8c8e" stroke-width="0.9"/></svg><svg class="a" style="left:76px;top:298px;" width="9" height="12" viewBox="0 0 9 12"><path d="M0.5 11 H8.5 V4.8 L4.5 0.5 L0.5 4.8 Z" fill="#313335" stroke="#6b6e70" stroke-width="1"/><path d="M2 7.5H7" stroke="#8a8c8e" stroke-width="0.9"/></svg><svg class="a" style="left:76px;top:474px;" width="9" height="12" viewBox="0 0 9 12"><path d="M0.5 11 H8.5 V4.8 L4.5 0.5 L0.5 4.8 Z" fill="#313335" stroke="#6b6e70" stroke-width="1"/><path d="M2 7.5H7" stroke="#8a8c8e" stroke-width="0.9"/></svg><svg class="a" style="left:76px;top:168.2px;" width="9" height="11" viewBox="0 0 9 11"><path d="M0.5 0.5 H8.5 V6.5 L4.5 10.8 L0.5 6.5 Z" fill="#313335" stroke="#6b6e70" stroke-width="1"/><path d="M2 4H7" stroke="#8a8c8e" stroke-width="0.9"/></svg><svg class="a" style="left:76px;top:388.2px;" width="9" height="11" viewBox="0 0 9 11"><path d="M0.5 0.5 H8.5 V6.5 L4.5 10.8 L0.5 6.5 Z" fill="#313335" stroke="#6b6e70" stroke-width="1"/><path d="M2 4H7" stroke="#8a8c8e" stroke-width="0.9"/></svg><svg class="a" style="left:76px;top:410.2px;" width="9" height="11" viewBox="0 0 9 11"><path d="M0.5 0.5 H8.5 V6.5 L4.5 10.8 L0.5 6.5 Z" fill="#313335" stroke="#6b6e70" stroke-width="1"/><path d="M2 4H7" stroke="#8a8c8e" stroke-width="0.9"/></svg><svg class="a" style="left:94px;top:427px;" width="12" height="15" viewBox="0 0 12 15"><path d="M6 0.5 A5.3 5.3 0 0 1 9.3 10 V11 H2.7 V10 A5.3 5.3 0 0 1 6 0.5Z" fill="#f0a732"/><path d="M3.5 12.5H8.5M4 14.3H8" stroke="#d8d8d8" stroke-width="1"/></svg><svg class="a" style="left:1826px;top:91px;" width="13" height="12" viewBox="0 0 13 12"><path d="M6.5 0.5 L12.5 11.5 H0.5 Z" fill="#f0a732"/><path d="M6.5 4V8M6.5 9.3V10.5" stroke="#2b2b2b" stroke-width="1.5"/></svg><div class="a" style="left:1841px;top:88.0px;font-size:12.5px;line-height:20px;color:#bbbbbb;font-weight:400;">5</div><svg class="a" style="left:1859px;top:94px;" width="10" height="6" viewBox="0 0 10 6"><path d="M0.5 5.5 L5 1 L9.5 5.5" fill="none" stroke="#afb1b3" stroke-width="1.3"/></svg><svg class="a" style="left:1880px;top:95px;" width="10" height="6" viewBox="0 0 10 6"><path d="M0.5 0.5 L5 5 L9.5 0.5" fill="none" stroke="#afb1b3" stroke-width="1.3"/></svg><div class="a" style="left:1879px;top:185px;width:2px;height:4px;background:#499c54;"></div><div class="a" style="left:1883px;top:200px;width:14px;height:2px;background:#c79a28;"></div><div class="a" style="left:1879px;top:208px;width:2px;height:19px;background:#4f7aa5;"></div><div class="a" style="left:1879px;top:255px;width:2px;height:4px;background:#6e7072;"></div><div class="a" style="left:1883px;top:289px;width:14px;height:2px;background:#c79a28;"></div><div class="a" style="left:1887px;top:311px;width:9px;height:92px;background:#4a4c4e;"></div><div class="a" style="left:1883px;top:322px;width:14px;height:2px;background:#c79a28;"></div><div class="a" style="left:1879px;top:317px;width:2px;height:37px;background:#499c54;"></div><div class="a" style="left:1879px;top:382px;width:2px;height:10px;background:#4f7aa5;"></div><svg class="a" style="left:33px;top:521px;" width="14" height="14" viewBox="0 0 14 14"><circle cx="7" cy="7" r="7" fill="#b58a34"/><path d="M8.8 3.3 C7.2 2.8 6.3 3.6 6.3 5 V11 M4.8 6.2 H8.5" fill="none" stroke="#3c3224" stroke-width="1.1"/></svg><div class="a" style="left:52.5px;top:518.5px;font-size:12.5px;line-height:20px;color:#bbbbbb;font-weight:400;">Init()</div><div class="a" style="left:28px;top:545.0px;font-size:12.7px;line-height:20px;color:#bbbbbb;font-weight:400;">Log:</div><div class="a" style="left:72.5px;top:545.0px;font-size:12.7px;line-height:20px;color:#bbbbbb;font-weight:400;">HiLog</div><div class="a" style="left:130px;top:545.0px;font-size:12.7px;line-height:20px;color:#bbbbbb;font-weight:400;">FaultLog</div><div class="a" style="left:118px;top:565px;width:73px;height:3px;border-radius:2px;background:#747a80"></div><div class="a" style="left:203px;top:545.0px;font-size:12.4px;line-height:20px;color:#bbbbbb;font-weight:400;">AnalyzeStackTrace</div><svg class="a" style="left:1851px;top:547px;" width="14" height="14" viewBox="0 0 14 14"><polygon points="4.75,3.10 5.79,2.15 5.76,0.62 8.24,0.62 8.21,2.15 9.25,3.10 9.25,3.10 10.60,3.53 11.91,2.74 13.15,4.88 11.81,5.62 11.50,7.00 11.50,7.00 11.81,8.38 13.15,9.12 11.91,11.26 10.60,10.47 9.25,10.90 9.25,10.90 8.21,11.85 8.24,13.38 5.76,13.38 5.79,11.85 4.75,10.90 4.75,10.90 3.40,10.47 2.09,11.26 0.85,9.12 2.19,8.38 2.50,7.00 2.50,7.00 2.19,5.62 0.85,4.88 2.09,2.74 3.40,3.53 4.75,3.10" fill="#c0c0c0"/><circle cx="7" cy="7" r="2" fill="#3c3f41"/></svg><div class="a" style="left:1878px;top:553px;width:12px;height:2px;background:#afb1b3;"></div><svg class="a" style="left:28px;top:580px;" width="16" height="16" viewBox="0 0 16 16"><circle cx="8" cy="8" r="6.6" fill="none" stroke="#afb1b3" stroke-width="1.4"/><path d="M8 1.5V6M8 10V14.5M1.5 8H6M10 8H14.5" stroke="#afb1b3" stroke-width="1.6"/></svg><svg class="a" style="left:30px;top:607px;" width="13" height="13" viewBox="0 0 13 13"><path d="M11 5 A5 5 0 0 0 2.2 3.8 M2 8 A5 5 0 0 0 10.8 9.2" fill="none" stroke="#afb1b3" stroke-width="2"/><path d="M12.8 1.5 V6.5 H7.8Z M0.2 11.5 V6.5 H5.2Z" fill="#afb1b3"/></svg><svg class="a" style="left:31px;top:632px;" width="10" height="15" viewBox="0 0 10 15"><rect x="1" y="1" width="8" height="13" rx="1.2" fill="none" stroke="#afb1b3" stroke-width="1.8"/></svg><svg class="a" style="left:29px;top:659px;" width="14" height="14" viewBox="0 0 14 14"><path d="M0.5 0.5H13.5V13.5H0.5Z" fill="#afb1b3"/><rect x="2.5" y="3" width="9" height="3.5" fill="#3c3f41"/><rect x="3.5" y="9.5" width="7" height="4" fill="#3c3f41"/><rect x="5.5" y="10.5" width="3" height="3" fill="#afb1b3"/></svg><div class="a" style="left:26px;top:682px;width:20px;height:1px;background:#55585a;"></div><div class="a" style="left:31.5px;top:689.5px;font-size:15.5px;line-height:20px;color:#afb1b3;font-weight:700;">?</div><div class="a" style="left:59px;top:577px;width:362px;height:26px;border:1px solid #5e6060;border-radius:2px;background:#3c3f41"></div><svg class="a" style="left:70px;top:583px;" width="10" height="14" viewBox="0 0 10 14"><rect x="0.75" y="0.75" width="7.5" height="12.5" rx="1" fill="none" stroke="#afb1b3" stroke-width="1.5"/></svg><div class="a" style="left:83px;top:584px;width:123px;height:11px;background:#ffffff;border-radius:6px"></div><svg class="a" style="left:405px;top:588px;" width="9" height="5" viewBox="0 0 9 5"><path d="M0 0H9L4.5 5Z" fill="#afb1b3"/></svg><div class="a" style="left:59px;top:615px;width:362px;height:24px;border:1px solid #5e6060;border-radius:2px;background:#45494a"></div><svg class="a" style="left:65px;top:620px;" width="17" height="13" viewBox="0 0 17 13"><circle cx="5.5" cy="5.5" r="4.3" fill="none" stroke="#8a8c8e" stroke-width="1.2"/><path d="M8.5 8.5L11.5 11.5" stroke="#8a8c8e" stroke-width="1.3"/><path d="M12 5.5H16L14 7.5Z" fill="#8a8c8e"/></svg><svg class="a" style="left:58px;top:656px;" width="9" height="6" viewBox="0 0 9 6"><path d="M0.5 0.5 L4.5 4.5 L8.5 0.5" fill="none" stroke="#afb1b3" stroke-width="1.2"/></svg><div class="a" style="left:73.5px;top:649.5px;font-size:12.8px;line-height:20px;color:#bbbbbb;font-weight:400;">com.samples.recovery</div><svg class="a" style="left:76px;top:676px;" width="9" height="6" viewBox="0 0 9 6"><path d="M0.5 0.5 L4.5 4.5 L8.5 0.5" fill="none" stroke="#afb1b3" stroke-width="1.2"/></svg><div class="a" style="left:91px;top:669.5px;font-size:12.8px;line-height:20px;color:#bbbbbb;font-weight:400;">cppcrash</div><div class="a" style="left:51px;top:689px;width:378px;height:20px;background:#0d293e;"></div><div class="a" style="left:109px;top:689.5px;font-size:12.7px;line-height:20px;color:#bbbbbb;font-weight:400;">2024-04-29 15:10:02</div><div class="a" style="left:109px;top:709.5px;font-size:12.7px;line-height:20px;color:#bbbbbb;font-weight:400;">2024-04-29 14:57:50</div><div class="a" style="left:109px;top:729.5px;font-size:12.7px;line-height:20px;color:#bbbbbb;font-weight:400;">2024-04-29 14:55:05</div><div class="a" style="left:109px;top:749.5px;font-size:12.7px;line-height:20px;color:#bbbbbb;font-weight:400;">2024-04-29 14:46:50</div><div class="a" style="left:109px;top:769.5px;font-size:12.7px;line-height:20px;color:#bbbbbb;font-weight:400;">2024-04-29 14:17:47</div><div class="a" style="left:109px;top:789.5px;font-size:12.7px;line-height:20px;color:#bbbbbb;font-weight:400;">2024-04-29 14:07:12</div><div class="a" style="left:109px;top:809.5px;font-size:12.7px;line-height:20px;color:#bbbbbb;font-weight:400;">2024-04-29 13:50:57</div><div class="a" style="left:109px;top:829.5px;font-size:12.7px;line-height:20px;color:#bbbbbb;font-weight:400;">2024-04-29 12:02:13</div><div class="a" style="left:431px;top:568px;width:1466px;height:428px;overflow:hidden"><div class="a m" style="left:12px;top:1px;font-size:14.5px;line-height:22px;letter-spacing:-0.7014px"><span style="color:#bbbbbb">PreInstalled:No</span></div><div class="a m" style="left:12px;top:23px;font-size:14.5px;line-height:22px;letter-spacing:-0.7014px"><span style="color:#bbbbbb">Foreground:Yes</span></div><div class="a m" style="left:12px;top:45px;font-size:14.5px;line-height:22px;letter-spacing:-0.7014px"><span style="color:#bbbbbb">Timestamp:2024-04-29 15:10:02.458</span></div><div class="a m" style="left:12px;top:67px;font-size:14.5px;line-height:22px;letter-spacing:-0.7014px"><span style="color:#ff6b68">Pid:36471</span></div><div class="a m" style="left:12px;top:89px;font-size:14.5px;line-height:22px;letter-spacing:-0.7014px"><span style="color:#bbbbbb">Uid:20020144</span></div><div class="a m" style="left:12px;top:111px;font-size:14.5px;line-height:22px;letter-spacing:-0.7014px"><span style="color:#bbbbbb">Process name:com.samples.recovery</span></div><div class="a m" style="left:12px;top:133px;font-size:14.5px;line-height:22px;letter-spacing:-0.7014px"><span style="color:#bbbbbb">Process life time:4s</span></div><div class="a m" style="left:12px;top:155px;font-size:14.5px;line-height:22px;letter-spacing:-0.7014px"><span style="color:#ff6b68">Reason:Signal:SIGSEGV(SI_TKILL)@0x01317bb000008e77 from:36471:20020144</span></div><div class="a m" style="left:12px;top:177px;font-size:14.5px;line-height:22px;letter-spacing:-0.7014px"><span style="color:#bbbbbb">LastFatalMessage:This is an unexpected memory usage behavior.</span></div><div class="a m" style="left:12px;top:199px;font-size:14.5px;line-height:22px;letter-spacing:-0.7014px"><span style="color:#bbbbbb">Fault thread info:</span></div><div class="a m" style="left:12px;top:221px;font-size:14.5px;line-height:22px;letter-spacing:-0.7014px"><span style="color:#bbbbbb">Tid:36471, Name:amples.recovery</span></div><div class="a m" style="left:12px;top:243px;font-size:14.5px;line-height:22px;letter-spacing:-0.7014px"><span style="color:#bbbbbb">#00 pc 000000000019369c /system/lib/ld-musl-aarch64.so.1(raise+228)(ff4c94d996663814715bedb2032b2bbc)</span></div><div class="a m" style="left:12px;top:265px;font-size:14.5px;line-height:22px;letter-spacing:-0.7014px"><span style="color:#bbbbbb">#01 pc 00000000000a6b6c /system/lib/ld-musl-aarch64.so.1(cache_bin_dalloc_safety_checks+208)(ff4c94d996663814715bedb2032b2bbc)</span></div><div class="a m" style="left:12px;top:287px;font-size:14.5px;line-height:22px;letter-spacing:-0.7014px"><span style="color:#bbbbbb">#02 pc 00000000000ae918 /system/lib/ld-musl-aarch64.so.1(free_default+428)(ff4c94d996663814715bedb2032b2bbc)</span></div><div class="a m" style="left:12px;top:309px;font-size:14.5px;line-height:22px;letter-spacing:-0.7014px"><span style="color:#287bde;text-decoration:underline;text-underline-offset:2px;text-decoration-thickness:1px">#03 pc 0000000000001d5c /data/storage/el1/bundle/libs/arm64/libentry.so(TriggerCrash(napi_env__*, napi_callback_info__*)+44)(d2ea4b1e0105d268c9b6aa8c27b2c259332c0274)</span></div><div class="a m" style="left:12px;top:331px;font-size:14.5px;line-height:22px;letter-spacing:-0.7014px"><span style="color:#bbbbbb">#04 pc 0000000000033678 /system/lib64/platformsdk/libace_napi.z.so(ArkNativeFunctionCallBack(panda::JsiRuntimeCallInfo*)+372)(7d6f229764fdd4b72926465066bc475e)</span></div><div class="a m" style="left:12px;top:353px;font-size:14.5px;line-height:22px;letter-spacing:-0.7014px"><span style="color:#bbbbbb">#05 pc 00000000001d7f38 /system/lib64/module/arkcompiler/stub.an(RTStub_PushCallArgsAndDispatchNative+40)</span></div><div class="a m" style="left:12px;top:375px;font-size:14.5px;line-height:22px;letter-spacing:-0.7014px"><span style="color:#bbbbbb">#06 at doTriggerException </span><span style="color:#287bde;text-decoration:underline;text-underline-offset:2px;text-decoration-thickness:1px">(entry/src/main/ets/pages/FaultTriggerPage.ets:72:7)</span></div><div class="a m" style="left:12px;top:397px;font-size:14.5px;line-height:22px;letter-spacing:-0.7014px"><span style="color:#bbbbbb">#07 at triggerNativeException </span><span style="color:#287bde;text-decoration:underline;text-underline-offset:2px;text-decoration-thickness:1px">(entry/src/main/ets/pages/FaultTriggerPage.ets:79:5)</span></div><div class="a m" style="left:12px;top:419px;font-size:14.5px;line-height:22px;letter-spacing:-0.7014px"><span style="color:#bbbbbb">#08 at anonymous </span><span style="color:#287bde;text-decoration:underline;text-underline-offset:2px;text-decoration-thickness:1px">(entry/src/main/ets/pages/FaultTriggerPage.ets:353:10)</span></div></div><div class="a" style="left:1888px;top:570px;width:8px;height:26px;background:#4a4c4e;border-radius:0px"></div><div class="a" style="left:443px;top:987px;width:735px;height:8px;background:rgba(90,90,90,0.75);"></div><div class="a" style="left:366px;top:997px;width:55px;height:22px;background:#2d2f30;"></div><svg class="a" style="left:33px;top:1002px;" width="10" height="14" viewBox="0 0 10 14"><circle cx="1.8" cy="1.8" r="1.7" fill="#afb1b3"/><circle cx="1.8" cy="11.3" r="1.7" fill="#afb1b3"/><circle cx="7.3" cy="3" r="1.7" fill="#afb1b3"/><path d="M1.8 1.8V11.3M7.3 3 C7.3 7.5 4.5 8 1.8 9" fill="none" stroke="#afb1b3" stroke-width="1.6"/></svg><div class="a" style="left:47.7px;top:999.0px;font-size:12.4px;line-height:20px;color:#bbbbbb;font-weight:400;">Git</div><svg class="a" style="left:82px;top:1003px;" width="9" height="10" viewBox="0 0 9 10"><path d="M0.5 0.5L8.5 5L0.5 9.5Z" fill="#afb1b3"/></svg><div class="a" style="left:98px;top:999.0px;font-size:12.2px;line-height:20px;color:#bbbbbb;font-weight:400;">Run</div><svg class="a" style="left:140px;top:1002px;" width="11" height="10" viewBox="0 0 11 10"><path d="M0 1H2M0 5H2M0 9H2M3.5 1H11M3.5 5H11M3.5 9H11" stroke="#afb1b3" stroke-width="1.6"/></svg><div class="a" style="left:155px;top:999.0px;font-size:11.4px;line-height:20px;color:#bbbbbb;font-weight:400;">TODO</div><svg class="a" style="left:208px;top:1002px;" width="11" height="11" viewBox="0 0 11 11"><circle cx="5.5" cy="5.5" r="5.5" fill="#d9534f"/><path d="M5.5 2.3V6.5M5.5 7.8V9" stroke="#3c3f41" stroke-width="1.5"/></svg><div class="a" style="left:224px;top:999.0px;font-size:11.8px;line-height:20px;color:#bbbbbb;font-weight:400;">Problems</div><svg class="a" style="left:294px;top:1002px;" width="12" height="11" viewBox="0 0 12 11"><rect x="0" y="0" width="12" height="11" fill="#afb1b3"/><path d="M2 2.5L4.5 5L2 7.5M5.5 8.5H9" fill="none" stroke="#3c3f41" stroke-width="1.3"/></svg><div class="a" style="left:311px;top:999.0px;font-size:12.1px;line-height:20px;color:#bbbbbb;font-weight:400;">Terminal</div><svg class="a" style="left:376px;top:1001px;" width="13" height="13" viewBox="0 0 13 13"><rect x="0.75" y="1.75" width="11.5" height="10.5" fill="none" stroke="#afb1b3" stroke-width="1.5"/><path d="M3 0V3M10 0V3M3 5.5H10M3 8.5H10" stroke="#afb1b3" stroke-width="1.4"/></svg><div class="a" style="left:393.4px;top:999.0px;font-size:12.4px;line-height:20px;color:#d8d8d8;font-weight:400;">Log</div><svg class="a" style="left:433px;top:1002px;" width="13" height="13" viewBox="0 0 13 13"><circle cx="6" cy="6" r="5" fill="none" stroke="#afb1b3" stroke-width="1.6"/><path d="M9.5 9.5L12.5 12.5" stroke="#afb1b3" stroke-width="1.8"/><path d="M4 4.5L6.5 7M6.5 4L4.5 8" stroke="#afb1b3" stroke-width="1"/></svg><div class="a" style="left:450px;top:999.0px;font-size:11.75px;line-height:20px;color:#bbbbbb;font-weight:400;">Code Linter</div><svg class="a" style="left:531px;top:1002px;" width="13" height="12" viewBox="0 0 13 12"><path d="M0.5 5L12.5 0.5L8.5 11.5L6 7Z" fill="none" stroke="#afb1b3" stroke-width="1.4"/><path d="M6 7L12.5 0.5" stroke="#afb1b3" stroke-width="1.2"/></svg><div class="a" style="left:550.6px;top:999.0px;font-size:12.1px;line-height:20px;color:#bbbbbb;font-weight:400;">Profiler</div><svg class="a" style="left:609px;top:1002px;" width="13" height="12" viewBox="0 0 13 12"><path d="M3.5 0.5H9.5L12.5 6L9.5 11.5H3.5L0.5 6Z" fill="#afb1b3"/><path d="M5 3.5L8.5 6L5 8.5Z" fill="#3c3f41"/></svg><div class="a" style="left:625.6px;top:999.0px;font-size:11.4px;line-height:20px;color:#bbbbbb;font-weight:400;">Services</div><svg class="a" style="left:687px;top:1001px;" width="13" height="13" viewBox="0 0 13 13"><path d="M1 4L5 0.5L7 2.5L5.5 4L12.5 11.5L11 13L4 5.5L3 6.5Z" fill="#afb1b3"/></svg><div class="a" style="left:704.7px;top:999.0px;font-size:12.4px;line-height:20px;color:#bbbbbb;font-weight:400;">Build</div><svg class="a" style="left:754px;top:1002px;" width="12" height="12" viewBox="0 0 12 12"><rect x="0.75" y="0.75" width="10.5" height="10.5" fill="none" stroke="#afb1b3" stroke-width="1.5"/><path d="M0.75 3.5H11.25M4 3.5V11.25M4 6.5H11.25M4 9H11.25" stroke="#afb1b3" stroke-width="1.2"/></svg><div class="a" style="left:771px;top:999.0px;font-size:11.8px;line-height:20px;color:#bbbbbb;font-weight:400;">ArkUI Inspector</div><svg class="a" style="left:6px;top:1024px;" width="12" height="12" viewBox="0 0 12 12"><rect x="3" y="0.5" width="8.5" height="8.5" fill="none" stroke="#afb1b3" stroke-width="1"/><path d="M0.5 3V11.5H9" fill="none" stroke="#afb1b3" stroke-width="1"/></svg><div class="a" style="left:1564px;top:1024px;width:12px;height:12px;border-radius:50%;background:#2ea43a"></div><div class="a" style="left:1588px;top:1024px;width:12px;height:12px;border-radius:50%;background:#2ea43a"></div><div class="a" style="left:1612.7px;top:1020.0px;font-size:12.2px;line-height:20px;color:#bbbbbb;font-weight:400;">59:93</div><div class="a" style="left:1655.3px;top:1020.0px;font-size:11.2px;line-height:20px;color:#bbbbbb;font-weight:400;">CRLF</div><div class="a" style="left:1695.4px;top:1020.0px;font-size:12.2px;line-height:20px;color:#bbbbbb;font-weight:400;">UTF-8</div><div class="a" style="left:1741.3px;top:1020.0px;font-size:12.8px;line-height:20px;color:#bbbbbb;font-weight:400;">4 spaces</div><svg class="a" style="left:1805px;top:1023px;" width="11" height="14" viewBox="0 0 11 14"><circle cx="2" cy="12" r="1.6" fill="#afb1b3"/><path d="M2 1V12M2 9C2 5 9 6 9 1" fill="none" stroke="#afb1b3" stroke-width="1.5"/></svg><div class="a" style="left:1821.6px;top:1020.0px;font-size:13px;line-height:20px;color:#bbbbbb;font-weight:400;">master</div><svg class="a" style="left:1871px;top:1023px;" width="12" height="13" viewBox="0 0 12 13"><rect x="0.5" y="6" width="11" height="7" fill="#afb1b3"/><path d="M2.5 6V3.5A2.5 2.5 0 0 1 7.5 3.5" fill="none" stroke="#afb1b3" stroke-width="1.5"/></svg><svg class="a" style="left:1895px;top:1023px;" width="13" height="13" viewBox="0 0 13 13"><circle cx="6.5" cy="6.5" r="6.5" fill="#afb1b3"/><path d="M6.5 2.5V7.5M6.5 9V10.5" stroke="#3c3f41" stroke-width="1.8"/></svg><div class="a" style="left:109px;top:228px;width:253px;height:24px;border:2px solid #ed1c24"></div><div class="a" style="left:437px;top:718px;width:574px;height:49px;border:2px solid #ed1c24"></div><div class="a" style="left:435px;top:811px;width:1345px;height:91px;border:2px solid #ed1c24"></div><svg class="a" style="left:0;top:0" width="1920" height="1040"><line x1="344" y1="258" x2="752.46" y2="706.62" stroke="#ed1c24" stroke-width="5.5" stroke-linecap="round"/><polygon points="761.00,716.00 741.78,707.81 751.79,705.88 754.64,696.09" fill="#ed1c24"/></svg><svg class="a" style="left:0;top:0" width="1920" height="1040"><line x1="802" y1="769" x2="833.15" y2="800.92" stroke="#ed1c24" stroke-width="5.5" stroke-linecap="round"/><polygon points="842.00,810.00 822.50,802.48 832.45,800.21 834.96,790.32" fill="#ed1c24"/></svg></body></html>
